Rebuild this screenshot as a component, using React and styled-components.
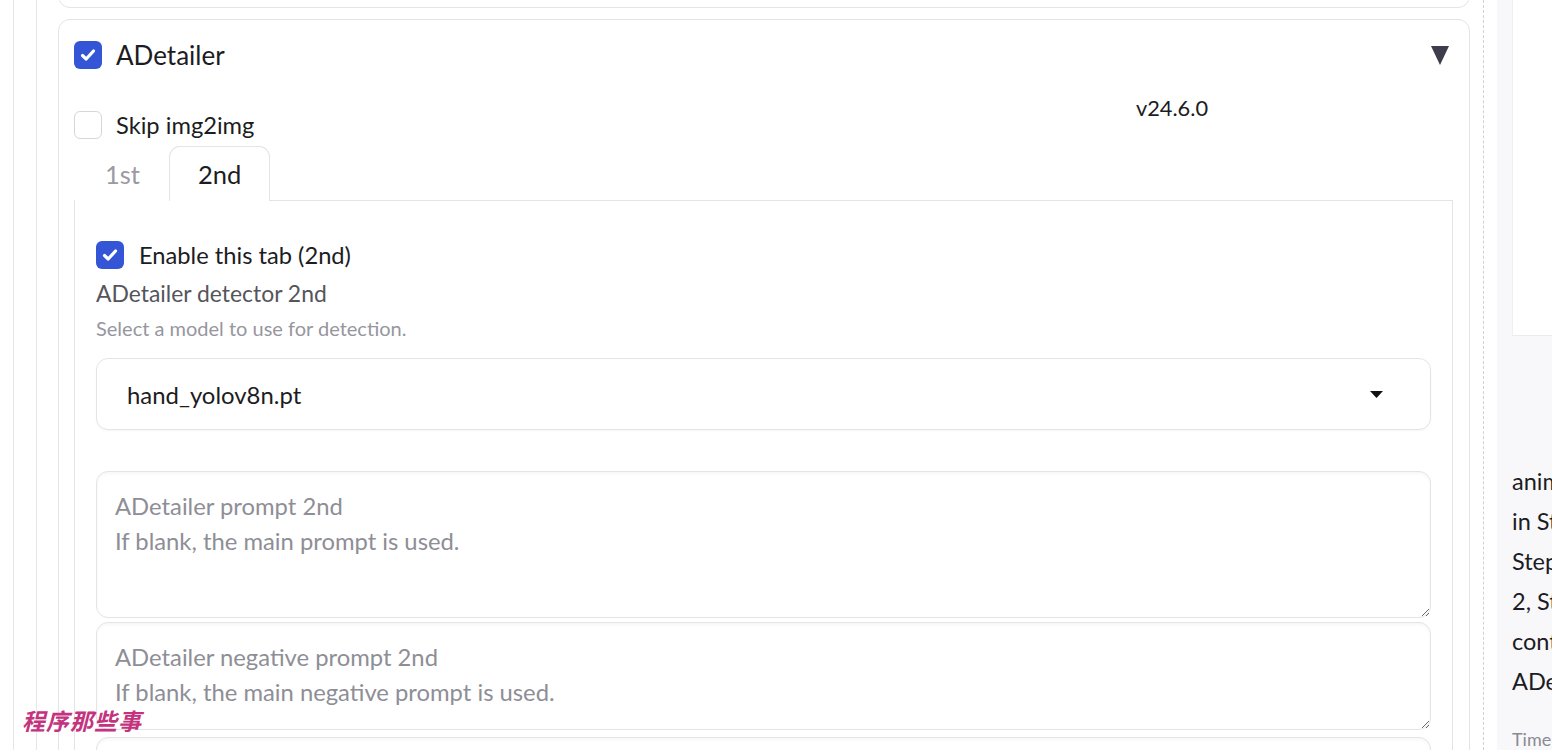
import React from 'react'
import styled, { createGlobalStyle } from 'styled-components'

const Global = createGlobalStyle`
  html, body { margin: 0; padding: 0; background: #fff; }
  body {
    font-family: Lato, "Noto Sans", "Noto Sans CJK SC", sans-serif;
    color: #1c1c22;
  }
`

const Page = styled.div`
  position: relative;
  display: flex;
  width: 1552px;
  height: 750px;
  overflow: hidden;
`

const LeftCol = styled.div`
  flex: none;
  width: 1484px;
  box-sizing: border-box;
  padding-left: 13px;
  border-right: 1px dashed #d0d0d6;
  display: flex;
`

const Frame = styled.div`
  flex: 1;
  display: flex;
  flex-direction: column;
  border-left: 1px solid #e6e6ea;
  padding-left: ${p => p.$pad}px;
`

const Cards = styled.div`
  display: flex;
  flex-direction: column;
  gap: 11px;
  margin-right: 13px;
`

const TopCard = styled.div`
  height: 38px;
  margin-top: -30px;
  box-sizing: border-box;
  border: 1px solid #e4e4e8;
  border-radius: 0 0 12px 12px;
`

const Card = styled.div`
  box-sizing: border-box;
  border: 1px solid #e4e4e8;
  border-radius: 12px;
  padding: 21px 16px 0 15px;
  height: 760px;
`

const HeaderRow = styled.div`
  display: flex;
  align-items: center;
  height: 28px;
`

const Box = styled.span`
  flex: none;
  width: 28px;
  height: 28px;
  box-sizing: border-box;
  border-radius: 6px;
  display: flex;
  align-items: center;
  justify-content: center;
  background: ${p => (p.$on ? '#3355d6' : '#fff')};
  border: ${p => (p.$on ? 'none' : '1.5px solid #d6d6dc')};
`

const Label = styled.span`
  margin-left: ${p => p.$gap || 14}px;
  font-size: ${p => p.$size || 23.7}px;
  line-height: 28px;
  color: #1c1c22;
`

const Caret = styled.svg`
  margin-left: auto;
  margin-right: 4px;
`

const MetaRow = styled.div`
  display: grid;
  grid-template-columns: 1fr 562px;
  margin-top: 27px;
`

const SkipCell = styled.div`
  display: flex;
  align-items: center;
  margin-top: 15px;
`

const Version = styled.div`
  text-align: center;
  font-size: 21.8px;
  line-height: 24px;
  color: #1c1c22;
`

const TabBar = styled.div`
  display: flex;
  margin-top: 7px;
  height: 54px;
  padding-left: 1px;
`

const Tab = styled.div`
  position: relative;
  z-index: 1;
  display: flex;
  align-items: center;
  padding: 0 28px 0 ${p => (p.$active ? 28 : 29)}px;
  font-size: 25.5px;
  color: ${p => (p.$active ? '#1c1c22' : '#9a9aa2')};
  background: #fff;
  border: 1px solid ${p => (p.$active ? '#e4e4e8' : 'transparent')};
  border-bottom: none;
  border-radius: 11px 11px 0 0;
  margin-bottom: -1px;
`

const Panel = styled.div`
  border: 1px solid #e4e4e8;
  padding: 40px 21px 0 21px;
`

const InfoLabel = styled.div`
  margin-top: 10px;
  font-size: 22.9px;
  line-height: 28px;
  color: #55555c;
`

const Info = styled.div`
  margin-top: 9px;
  font-size: 20px;
  line-height: 24px;
  color: #96969e;
`

const Select = styled.div`
  margin-top: 18px;
  height: 72px;
  box-sizing: border-box;
  border: 1px solid #e4e4e8;
  border-radius: 12px;
  box-shadow: 0 1px 2px rgba(0, 0, 0, 0.04);
  display: flex;
  align-items: center;
  padding: 0 47px 0 30px;
  font-size: 23.9px;
  color: #1c1c22;
`

const SelectCaret = styled.svg`
  margin-left: auto;
`

const Area = styled.textarea`
  display: block;
  width: 100%;
  box-sizing: border-box;
  height: ${p => p.$h}px;
  margin-top: ${p => p.$mt}px;
  border: 1px solid #e4e4e8;
  border-radius: 12px;
  box-shadow: inset 0 2px 3px rgba(0, 0, 0, 0.035);
  padding: 17px 18px;
  font-family: inherit;
  font-size: 23.8px;
  line-height: 35px;
  color: #1c1c22;
  background: #fff;
  outline: none;
  &::placeholder { color: #8e8e96; }
`

const RightCol = styled.div`
  flex: none;
  width: 600px;
  margin-left: 13px;
  padding-left: 15px;
  background: #f8f8fb;
`

const Gallery = styled.div`
  height: 336px;
  box-sizing: border-box;
  background: #fff;
  border-bottom: 1px solid #ececf0;
  border-left: 1px solid #f0f0f4;
`

const InfoText = styled.div`
  margin-top: 125px;
  font-size: 23.5px;
  line-height: 40px;
  color: #1c1c22;
  white-space: nowrap;
`

const TimeLine = styled.div`
  margin-top: 27px;
  font-size: 18px;
  color: #8a8a92;
`

const Watermark = styled.div`
  position: absolute;
  left: 22px;
  top: 703px;
  font-family: "Noto Sans CJK SC", sans-serif;
  font-size: 23px;
  font-weight: 700;
  font-style: italic;
  letter-spacing: 1px;
  color: #c4347e;
`

const Check = ({ on }) => (
  <Box $on={on}>
    {on && (
      <svg width="18" height="18" viewBox="0 0 18 18">
        <polyline points="3.5,9.5 7.2,13 14.5,5" fill="none" stroke="#fff" strokeWidth="3.2" strokeLinecap="round" strokeLinejoin="round" />
      </svg>
    )}
  </Box>
)

const infoLines = [
  'anime girl, long hair, looking at viewer, upper body',
  'in Studio lighting, masterpiece, best quality',
  'Steps: 20, Sampler: DPM++ 2M Karras, CFG scale: 7',
  '2, Style: none, Size: 512x768, Model hash: 6ce0161689',
  'controlnet: none, Denoising strength: 0.4',
  'ADetailer model: face_yolov8n.pt, ADetailer confidence: 0.3',
]

export default function App() {
  return (
    <>
      <Global />
      <Page>
        <LeftCol>
          <Frame $pad={22}>
            <Frame $pad={21}>
              <Cards>
                <TopCard />
                <Card>
                  <HeaderRow>
                    <Check on />
                    <Label $size={26}>ADetailer</Label>
                    <Caret width="18" height="19" viewBox="0 0 18 19">
                      <polygon points="0,0 18,0 9,19" fill="#3d3d4e" />
                    </Caret>
                  </HeaderRow>
                  <MetaRow>
                    <SkipCell>
                      <Check />
                      <Label>Skip img2img</Label>
                    </SkipCell>
                    <Version>v24.6.0</Version>
                  </MetaRow>
                  <TabBar>
                    <Tab>1st</Tab>
                    <Tab $active>2nd</Tab>
                  </TabBar>
                  <Panel>
                    <HeaderRow>
                      <Check on />
                      <Label $gap={15}>Enable this tab (2nd)</Label>
                    </HeaderRow>
                    <InfoLabel>ADetailer detector 2nd</InfoLabel>
                    <Info>Select a model to use for detection.</Info>
                    <Select>
                      hand_yolov8n.pt
                      <SelectCaret width="13" height="7" viewBox="0 0 13 7">
                        <polygon points="0,0 13,0 6.5,7" fill="#111" />
                      </SelectCaret>
                    </Select>
                    <Area $h={147} $mt={41} placeholder={'ADetailer prompt 2nd\nIf blank, the main prompt is used.'} />
                    <Area $h={108} $mt={4} placeholder={'ADetailer negative prompt 2nd\nIf blank, the main negative prompt is used.'} />
                    <Area $h={60} $mt={7} />
                  </Panel>
                </Card>
              </Cards>
            </Frame>
          </Frame>
        </LeftCol>
        <RightCol>
          <Gallery />
          <InfoText>
            {infoLines.map(l => (
              <div key={l}>{l}</div>
            ))}
          </InfoText>
          <TimeLine>Time taken: 12.4 sec.</TimeLine>
        </RightCol>
        <Watermark>程序那些事</Watermark>
      </Page>
    </>
  )
}
